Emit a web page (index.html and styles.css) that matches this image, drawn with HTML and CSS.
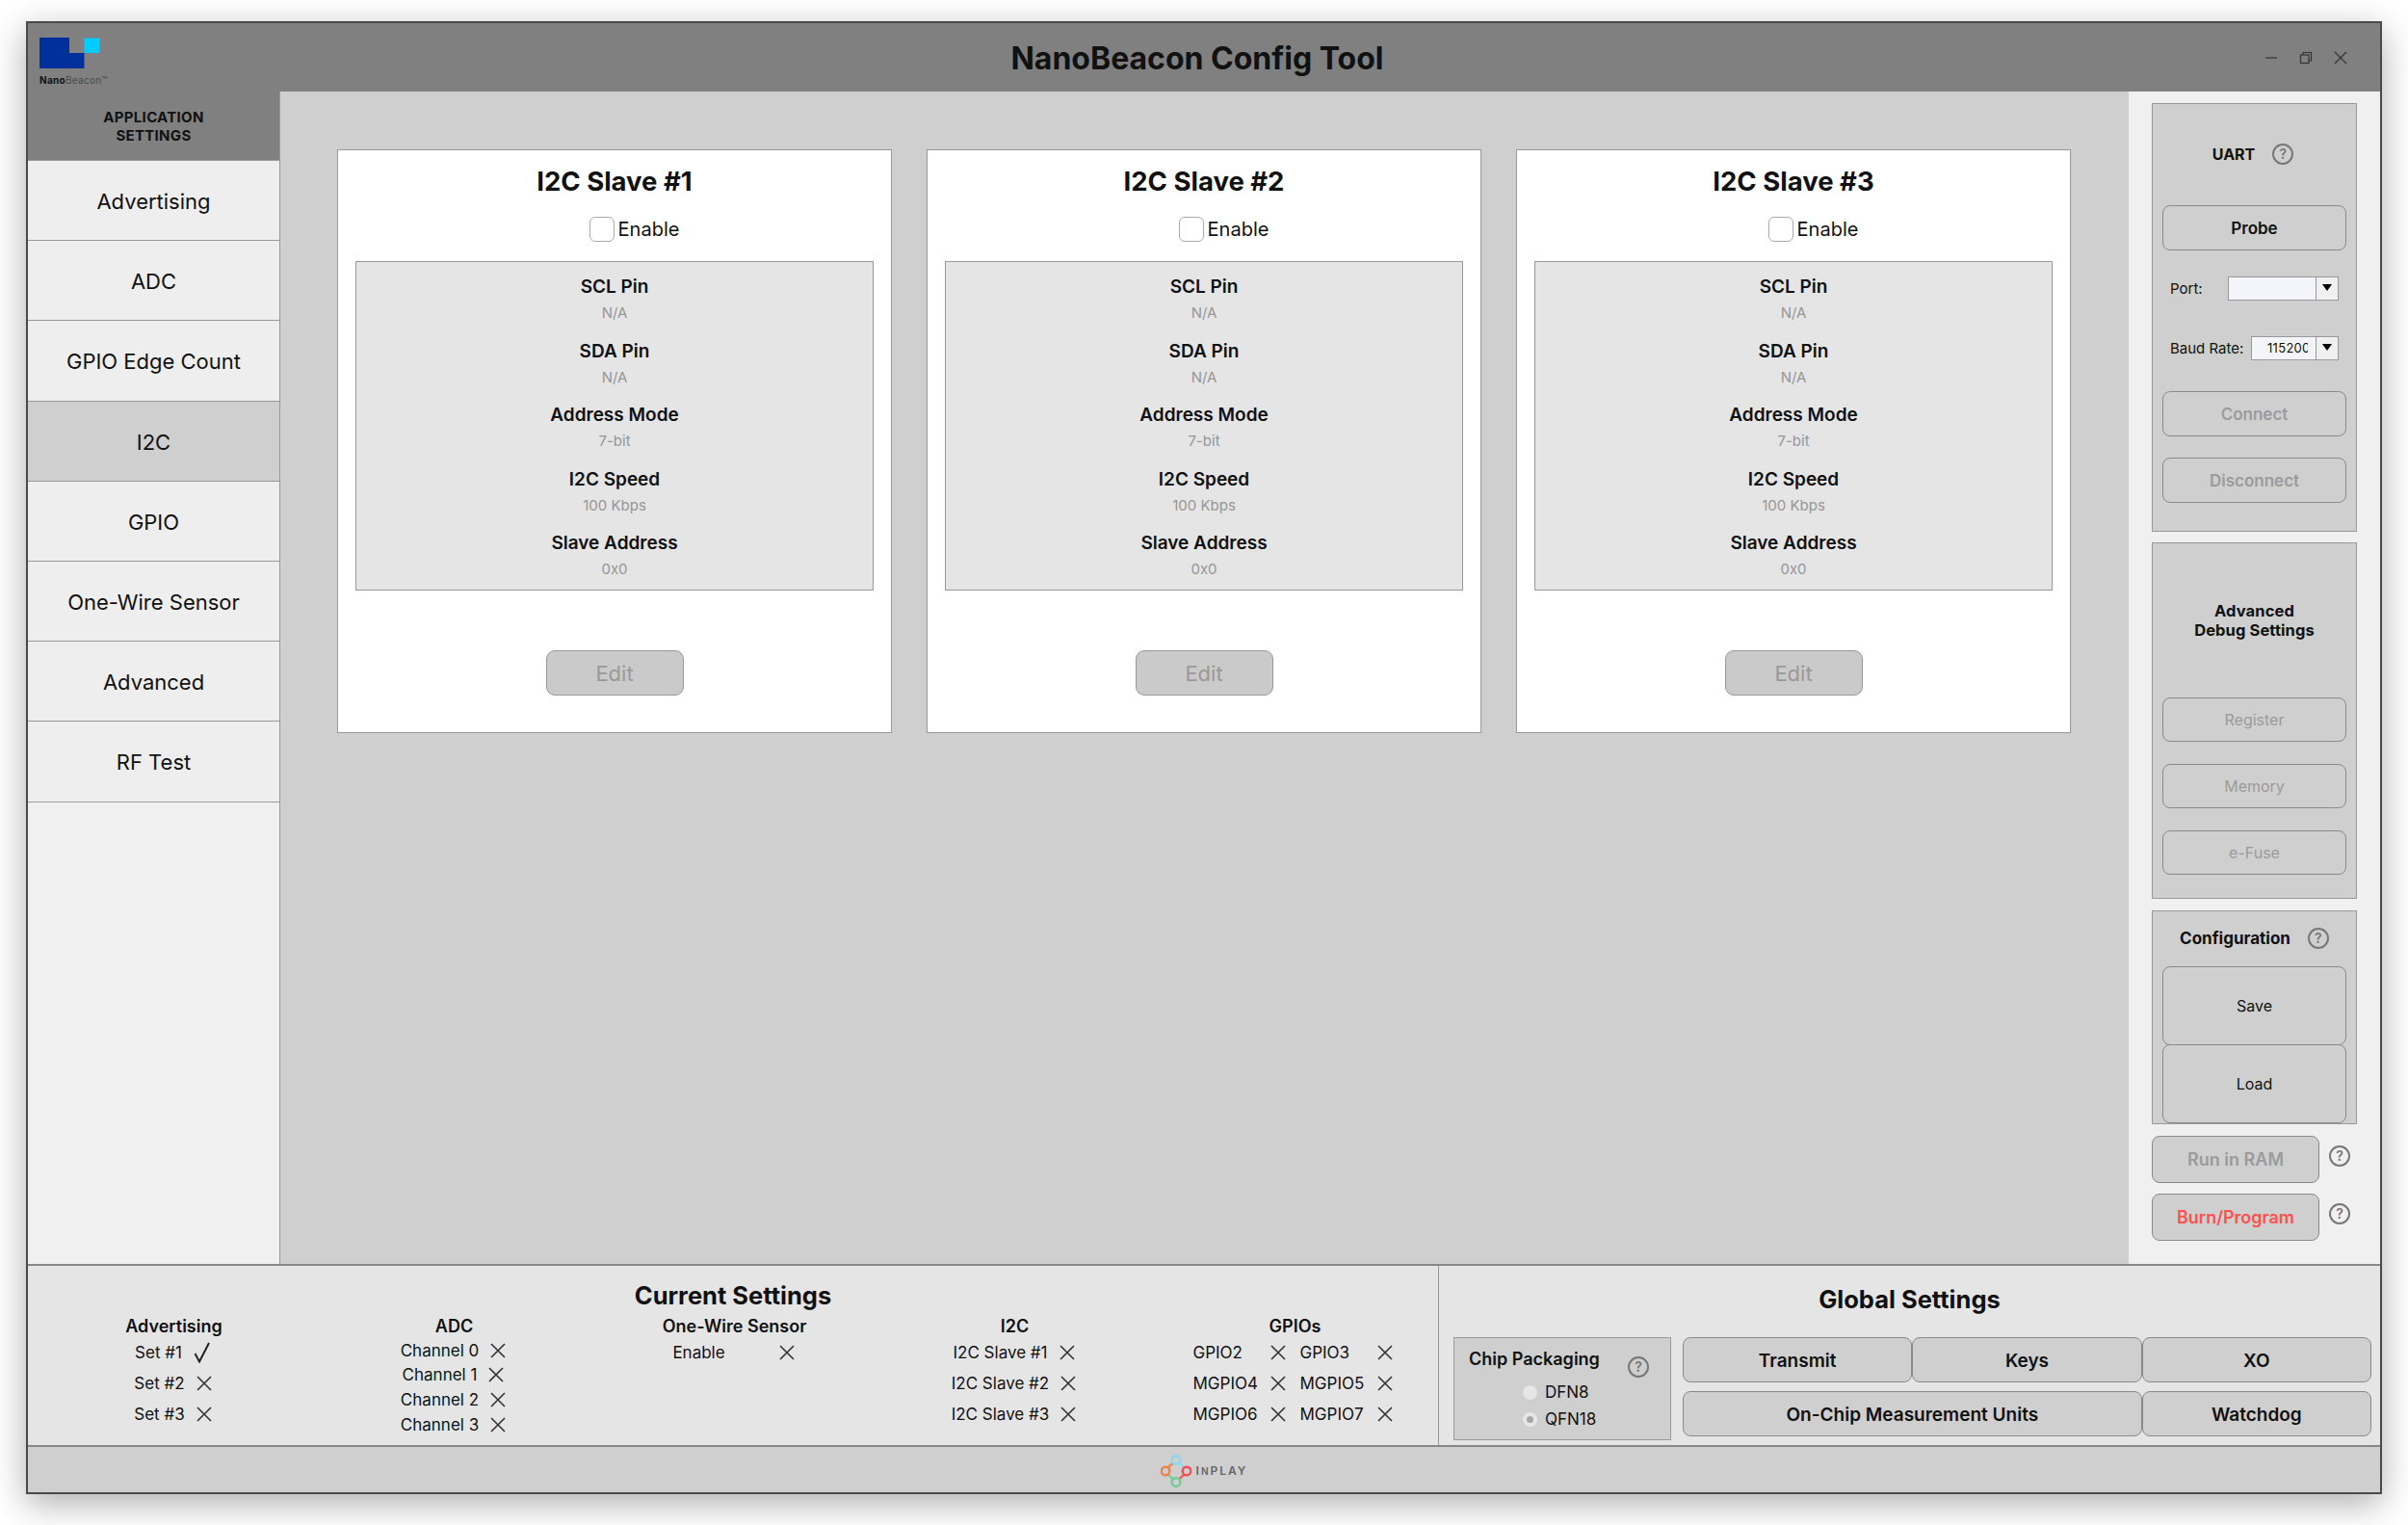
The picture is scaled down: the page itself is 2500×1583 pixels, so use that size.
FILE: index.html
```html
<!DOCTYPE html>
<html lang="en">
<head>
    <meta charset="UTF-8">
    <title>NanoBeacon Config Tool</title>
    <link rel="stylesheet" href="styles.css">
</head>
<body>
    <div class="window">
        <header class="titlebar">
            <div class="logo">
                <svg class="logo-mark" width="63" height="32" viewBox="0 0 63 32">
                    <path d="M0 0H31V16H46.500V32H0Z" fill="#00309b"/>
                    <rect x="46.500" y="0.500" width="16" height="15.500" fill="#00ccff"/>
                </svg>
                <div class="logo-text"><b>Nano</b>Beacon™</div>
            </div>
            <h1>NanoBeacon Config Tool</h1>
            <div class="window-controls">
                <svg width="14" height="14" viewBox="0 0 14 14"><path d="M1 7H13" stroke="#333" stroke-width="1.200"/></svg>
                <svg width="14" height="14" viewBox="0 0 14 14" fill="none" stroke="#333" stroke-width="1.200"><rect x="1.500" y="4" width="8.500" height="8.500"/><path d="M4 4V1.500H12.500V10H10"/></svg>
                <svg width="14" height="14" viewBox="0 0 14 14"><path d="M1 1L13 13M13 1L1 13" stroke="#333" stroke-width="1.200"/></svg>
            </div>
        </header>

        <div class="content">
            <nav class="sidebar">
                <div class="sidebar-head">APPLICATION<br>SETTINGS</div>
                <a class="nav-item">Advertising</a>
                <a class="nav-item">ADC</a>
                <a class="nav-item">GPIO Edge Count</a>
                <a class="nav-item nav-active">I2C</a>
                <a class="nav-item">GPIO</a>
                <a class="nav-item">One-Wire Sensor</a>
                <a class="nav-item">Advanced</a>
                <a class="nav-item">RF Test</a>
            </nav>

            <main class="main">
                <section class="card">
                    <h2>I2C Slave #1</h2>
                    <label class="enable"><span class="checkbox"></span>Enable</label>
                    <div class="fields">
                        <div class="field-name">SCL Pin</div><div class="field-value">N/A</div>
                        <div class="field-name">SDA Pin</div><div class="field-value">N/A</div>
                        <div class="field-name">Address Mode</div><div class="field-value">7-bit</div>
                        <div class="field-name">I2C Speed</div><div class="field-value">100 Kbps</div>
                        <div class="field-name">Slave Address</div><div class="field-value">0x0</div>
                    </div>
                    <button class="edit-btn">Edit</button>
                </section>
                <section class="card">
                    <h2>I2C Slave #2</h2>
                    <label class="enable"><span class="checkbox"></span>Enable</label>
                    <div class="fields">
                        <div class="field-name">SCL Pin</div><div class="field-value">N/A</div>
                        <div class="field-name">SDA Pin</div><div class="field-value">N/A</div>
                        <div class="field-name">Address Mode</div><div class="field-value">7-bit</div>
                        <div class="field-name">I2C Speed</div><div class="field-value">100 Kbps</div>
                        <div class="field-name">Slave Address</div><div class="field-value">0x0</div>
                    </div>
                    <button class="edit-btn">Edit</button>
                </section>
                <section class="card">
                    <h2>I2C Slave #3</h2>
                    <label class="enable"><span class="checkbox"></span>Enable</label>
                    <div class="fields">
                        <div class="field-name">SCL Pin</div><div class="field-value">N/A</div>
                        <div class="field-name">SDA Pin</div><div class="field-value">N/A</div>
                        <div class="field-name">Address Mode</div><div class="field-value">7-bit</div>
                        <div class="field-name">I2C Speed</div><div class="field-value">100 Kbps</div>
                        <div class="field-name">Slave Address</div><div class="field-value">0x0</div>
                    </div>
                    <button class="edit-btn">Edit</button>
                </section>
            </main>

            <aside class="tools">
                <div class="box box-uart">
                    <div class="box-head uart-head"><b>UART</b><span class="help">?</span></div>
                    <button class="btn btn-strong">Probe</button>
                    <div class="port-row">
                        <span>Port:</span>
                        <div class="combo combo-port"><span class="combo-text"></span><span class="combo-arrow"></span></div>
                    </div>
                    <div class="baud-row">
                        <span>Baud Rate:</span>
                        <div class="combo combo-baud"><span class="combo-text">115200</span><span class="combo-arrow"></span></div>
                    </div>
                    <button class="btn btn-strong btn-off connect-btn">Connect</button>
                    <button class="btn btn-strong btn-off disconnect-btn">Disconnect</button>
                </div>

                <div class="box box-debug">
                    <div class="box-head debug-head"><b>Advanced<br>Debug Settings</b></div>
                    <button class="btn btn-off debug-btn">Register</button>
                    <button class="btn btn-off debug-btn">Memory</button>
                    <button class="btn btn-off debug-btn">e-Fuse</button>
                </div>

                <div class="box box-config">
                    <div class="box-head config-head"><b>Configuration</b><span class="help">?</span></div>
                    <button class="btn config-btn">Save</button>
                    <button class="btn config-btn load-btn">Load</button>
                </div>

                <div class="action-row">
                    <button class="btn btn-strong btn-off action-btn">Run in RAM</button>
                    <span class="help">?</span>
                </div>
                <div class="action-row">
                    <button class="btn btn-strong btn-burn action-btn">Burn/Program</button>
                    <span class="help">?</span>
                </div>
            </aside>
        </div>

        <div class="bottom">
            <section class="current">
                <h3>Current Settings</h3>
                <div class="current-cols">
                    <div class="col">
                        <h4>Advertising</h4>
                        <div class="state"><span>Set #1</span><svg class="check" width="18" height="22" viewBox="0 0 18 22"><path d="M1.500 12L6 20.500L16 1" fill="none" stroke="#222" stroke-width="2"/></svg></div>
                        <div class="state"><span>Set #2</span><svg class="cross" viewBox="0 0 16 16"><path d="M1 1L15 15M15 1L1 15"/></svg></div>
                        <div class="state"><span>Set #3</span><svg class="cross" viewBox="0 0 16 16"><path d="M1 1L15 15M15 1L1 15"/></svg></div>
                    </div>
                    <div class="col col-adc">
                        <h4>ADC</h4>
                        <div class="state"><span>Channel 0</span><svg class="cross" viewBox="0 0 16 16"><path d="M1 1L15 15M15 1L1 15"/></svg></div>
                        <div class="state"><span>Channel 1</span><svg class="cross" viewBox="0 0 16 16"><path d="M1 1L15 15M15 1L1 15"/></svg></div>
                        <div class="state"><span>Channel 2</span><svg class="cross" viewBox="0 0 16 16"><path d="M1 1L15 15M15 1L1 15"/></svg></div>
                        <div class="state"><span>Channel 3</span><svg class="cross" viewBox="0 0 16 16"><path d="M1 1L15 15M15 1L1 15"/></svg></div>
                    </div>
                    <div class="col col-wire">
                        <h4>One-Wire Sensor</h4>
                        <div class="state"><span>Enable</span><svg class="cross" viewBox="0 0 16 16"><path d="M1 1L15 15M15 1L1 15"/></svg></div>
                    </div>
                    <div class="col">
                        <h4>I2C</h4>
                        <div class="state"><span>I2C Slave #1</span><svg class="cross" viewBox="0 0 16 16"><path d="M1 1L15 15M15 1L1 15"/></svg></div>
                        <div class="state"><span>I2C Slave #2</span><svg class="cross" viewBox="0 0 16 16"><path d="M1 1L15 15M15 1L1 15"/></svg></div>
                        <div class="state"><span>I2C Slave #3</span><svg class="cross" viewBox="0 0 16 16"><path d="M1 1L15 15M15 1L1 15"/></svg></div>
                    </div>
                    <div class="col">
                        <h4>GPIOs</h4>
                        <div class="gpio-grid">
                            <span>GPIO2</span><svg class="cross" viewBox="0 0 16 16"><path d="M1 1L15 15M15 1L1 15"/></svg>
                            <span>GPIO3</span><svg class="cross" viewBox="0 0 16 16"><path d="M1 1L15 15M15 1L1 15"/></svg>
                            <span>MGPIO4</span><svg class="cross" viewBox="0 0 16 16"><path d="M1 1L15 15M15 1L1 15"/></svg>
                            <span>MGPIO5</span><svg class="cross" viewBox="0 0 16 16"><path d="M1 1L15 15M15 1L1 15"/></svg>
                            <span>MGPIO6</span><svg class="cross" viewBox="0 0 16 16"><path d="M1 1L15 15M15 1L1 15"/></svg>
                            <span>MGPIO7</span><svg class="cross" viewBox="0 0 16 16"><path d="M1 1L15 15M15 1L1 15"/></svg>
                        </div>
                    </div>
                </div>
            </section>

            <section class="global">
                <h3>Global Settings</h3>
                <div class="global-row">
                    <div class="chip-box">
                        <div class="chip-head"><b>Chip Packaging</b><span class="help">?</span></div>
                        <div class="radio-row"><span class="radio"></span>DFN8</div>
                        <div class="radio-row"><span class="radio radio-on"></span>QFN18</div>
                    </div>
                    <div class="global-btns">
                        <button class="btn btn-strong">Transmit</button>
                        <button class="btn btn-strong">Keys</button>
                        <button class="btn btn-strong">XO</button>
                        <button class="btn btn-strong span-two">On-Chip Measurement Units</button>
                        <button class="btn btn-strong">Watchdog</button>
                    </div>
                </div>
            </section>
        </div>

        <footer class="footer">
            <svg width="32" height="34" viewBox="0 0 32 34" fill="none" stroke-width="2.400">
                <path d="M8 13L13 8.500" stroke="#ef8a55"/>
                <path d="M19 8.500L24 13" stroke="#8fd6ee"/>
                <path d="M8 21L13 25.500" stroke="#7fcf9e"/>
                <path d="M24 21L19 25.500" stroke="#ee5c62"/>
                <circle cx="16" cy="5.500" r="4.300" stroke="#8fd6ee"/>
                <circle cx="5" cy="17" r="4.300" stroke="#ef8050"/>
                <circle cx="27" cy="17" r="4.300" stroke="#ee5058"/>
                <circle cx="16" cy="28.500" r="4.300" stroke="#75cc98"/>
            </svg>
            <span class="inplay">I<small>N</small>PLAY</span>
        </footer>
    </div>
</body>
</html>
```

FILE: styles.css
```css
* {
    box-sizing: border-box;
    font-family: "Inter", "Liberation Sans", sans-serif;
}
html, body {
    margin: 0;
    height: 100%;
    background: white;
    overflow: hidden;
}
.window {
    display: flex;
    flex-direction: column;
    width: 2446px;
    height: 1529px;
    margin: 22px 0 0 27px;
    border: 2px solid #4a4a4a;
    background: #f0f0f0;
    box-shadow: 0 10px 34px rgba(0, 0, 0, 0.32);
    color: #111;
}

/* title bar */
.titlebar {
    display: grid;
    grid-template-columns: 1fr auto 1fr;
    align-items: center;
    flex: 0 0 71px;
    padding: 0 26px 0 12px;
    background: #808080;
}
.titlebar h1 {
    margin: 2px 0 0;
    font-size: 32px;
    font-weight: 700;
    color: #111;
}
.logo {
    display: flex;
    flex-direction: column;
    padding-top: 15px;
    align-self: start;
}
.logo-text {
    margin-top: 6px;
    font-size: 10px;
    letter-spacing: 0.3px;
    color: #4a4a4a;
}
.logo-text b {
    color: #111;
}
.window-controls {
    display: flex;
    justify-content: flex-end;
    gap: 22px;
    padding-right: 8px;
}

/* main row */
.content {
    display: flex;
    flex: 0 0 1217px;
    min-height: 0;
}
.sidebar {
    display: flex;
    flex-direction: column;
    flex: 0 0 262px;
    background: #f0f0f0;
    border-right: 1px solid #999;
}
.sidebar-head {
    display: flex;
    flex: none;
    align-items: center;
    justify-content: center;
    height: 72px;
    background: #808080;
    border-bottom: 1.500px solid #999;
    font-size: 15px;
    font-weight: 700;
    line-height: 19px;
    letter-spacing: 0.3px;
    text-align: center;
}
.nav-item {
    display: flex;
    flex: none;
    align-items: center;
    justify-content: center;
    height: 83.200px;
    padding-top: 2px;
    background: #eeeeee;
    border-bottom: 1.500px solid #999;
    font-size: 22px;
}
.nav-active {
    background: #cfcfcf;
}
.main {
    display: grid;
    grid-template-columns: repeat(3, 576px);
    grid-auto-rows: 606px;
    gap: 36px;
    flex: 1;
    padding: 60px 0 0 59px;
    background: #cfcfcf;
}

/* cards */
.card {
    display: flex;
    flex-direction: column;
    align-items: center;
    background: white;
    border: 1.500px solid #999;
}
.card h2 {
    margin: 15px 0 0;
    font-size: 27.500px;
    font-weight: 700;
    line-height: 34px;
}
.enable {
    display: flex;
    align-items: center;
    gap: 4px;
    height: 26px;
    margin: 20px 0 0 41px;
    font-size: 20px;
}
.checkbox {
    width: 26px;
    height: 26px;
    border: 1.500px solid #aaa;
    border-radius: 6px;
    background: white;
}
.fields {
    width: 538px;
    height: 342px;
    margin-top: 20px;
    padding-top: 14px;
    background: #e5e5e5;
    border: 1.500px solid #999;
    text-align: center;
}
.field-name {
    font-size: 19px;
    font-weight: 600;
    line-height: 24px;
}
.field-value {
    margin: 5px 0 17.600px;
    font-size: 15px;
    line-height: 20px;
    color: #969696;
}
.edit-btn {
    width: 143px;
    height: 47px;
    margin-top: 62px;
    background: #cacaca;
    border: 1.500px solid #999;
    border-radius: 9px;
    font-size: 22px;
    color: #999;
}

/* right column */
.tools {
    display: flex;
    flex-direction: column;
    flex: 0 0 261px;
    padding: 12px 24px 0;
    background: #f0f0f0;
}
.box {
    display: flex;
    flex: none;
    flex-direction: column;
    width: 213px;
    padding: 0 10px;
    background: #cfcfcf;
    border: 1.500px solid #999;
}
.box-uart {
    height: 445px;
}
.box-debug {
    height: 370px;
    margin-top: 11px;
}
.box-config {
    height: 222px;
    margin-top: 11.500px;
}
.box-head {
    display: flex;
    flex: none;
    align-items: center;
    justify-content: center;
    font-size: 16px;
    line-height: 20px;
    text-align: center;
}
.uart-head {
    height: 104.500px;
    gap: 18px;
    padding-right: 3px;
}
.debug-head {
    height: 159.500px;
    font-size: 16.500px;
    letter-spacing: 0.1px;
}
.config-head {
    height: 57px;
    gap: 18px;
    font-size: 17px;
}
.btn {
    flex: none;
    height: 47px;
    padding: 1px 0 0;
    background: #cfcfcf;
    border: 1.500px solid #8a8a8a;
    border-radius: 8px;
    font-size: 16px;
    color: #111;
}
.btn-strong {
    font-size: 17px;
    font-weight: 600;
}
.btn-off {
    color: #9b9b9b;
}
.btn-burn {
    color: #ff5050;
}
.help {
    display: inline-flex;
    align-items: center;
    justify-content: center;
    flex: none;
    width: 22px;
    height: 22px;
    border: 2px solid #777;
    border-radius: 50%;
    font-size: 14px;
    font-weight: 600;
    color: #777;
}
.port-row, .baud-row {
    display: flex;
    flex: none;
    align-items: center;
    justify-content: space-between;
    height: 25px;
    padding: 0 8px;
    font-size: 15px;
}
.port-row {
    margin-top: 27px;
}
.baud-row {
    margin-top: 37px;
}
.combo {
    display: flex;
    height: 25px;
    background: #f4f5fa;
    border: 1.500px solid #999;
}
.combo-port {
    width: 115px;
}
.combo-baud {
    width: 91px;
}
.combo-text {
    flex: 1;
    min-width: 0;
    margin: 0 8px 0 16px;
    overflow: hidden;
    font-size: 13px;
    line-height: 22px;
    letter-spacing: 0.3px;
    white-space: nowrap;
}
.combo-arrow {
    position: relative;
    flex: 0 0 23px;
    background: #f0f0f0;
    border-left: 1.500px solid #999;
}
.combo-arrow::after {
    content: "";
    position: absolute;
    left: 6px;
    top: 7px;
    border-style: solid;
    border-width: 7px 5.500px 0;
    border-color: black transparent transparent;
}
.connect-btn {
    margin-top: 32px;
}
.disconnect-btn {
    margin-top: 22px;
}
.debug-btn {
    height: 46.500px;
    margin-bottom: 22.500px;
}
.config-btn {
    height: 82px;
}
.load-btn {
    margin-top: -1px;
}
.action-row {
    display: flex;
    gap: 10px;
    margin-top: 12px;
}
.action-row:last-child {
    margin-top: 11px;
}
.action-row .help {
    margin-top: 10px;
}
.action-btn {
    width: 174px;
    height: 49px;
    font-size: 18px;
}

/* bottom panels */
.bottom {
    display: flex;
    flex: 0 0 190px;
    background: #e5e5e5;
    border-top: 2px solid #888;
    border-bottom: 2px solid #888;
}
.current {
    flex: 0 0 1465px;
    padding: 15px 0 0 6px;
    border-right: 1.500px solid #999;
}
.current h3, .global h3 {
    margin: 0;
    font-size: 25.500px;
    font-weight: 700;
    line-height: 32px;
    text-align: center;
}
.current h3 {
    padding-right: 6px;
}
.current-cols {
    display: grid;
    grid-template-columns: repeat(5, 291px);
    margin-top: 4px;
}
.col h4 {
    margin: 0 0 -1.500px;
    font-size: 18px;
    font-weight: 600;
    line-height: 24px;
    text-align: center;
}
.col-adc h4 {
    margin-bottom: 0;
}
.state {
    display: flex;
    align-items: center;
    justify-content: center;
    gap: 12px;
    height: 32px;
    padding-right: 2px;
    font-size: 17px;
}
.col-adc .state {
    height: 25.600px;
}
.col-wire .state {
    gap: 56px;
}
.cross {
    flex: none;
    width: 16px;
    height: 16px;
    fill: none;
    stroke: #333;
    stroke-width: 1.600;
}
.gpio-grid {
    display: grid;
    grid-template-columns: 80px 31px 80px 16px;
    grid-auto-rows: 32px;
    align-items: center;
    justify-content: center;
    padding-right: 5px;
    font-size: 17px;
}
.global {
    flex: 1;
    padding-top: 19px;
}
.global-row {
    display: flex;
    gap: 12px;
    margin-top: 23px;
    padding: 0 9px 0 15px;
}
.chip-box {
    flex: 0 0 226px;
    height: 107px;
    background: #cfcfcf;
    border: 1.500px solid #999;
}
.chip-head {
    display: flex;
    align-items: flex-start;
    justify-content: space-between;
    height: 42px;
    padding: 10px 22px 0 15px;
    font-size: 18px;
    line-height: 24px;
}
.chip-head b {
    font-weight: 600;
}
.chip-head .help {
    margin-top: 9px;
}
.radio-row {
    display: flex;
    align-items: center;
    gap: 8px;
    height: 28px;
    padding-left: 71px;
    font-size: 17px;
}
.radio {
    position: relative;
    width: 15px;
    height: 15px;
    border-radius: 50%;
    background: #e6e6e6;
}
.radio-on::after {
    content: "";
    position: absolute;
    left: 4px;
    top: 4px;
    width: 7px;
    height: 7px;
    border-radius: 50%;
    background: #a5a5a5;
}
.global-btns {
    display: grid;
    flex: 1;
    grid-template-columns: repeat(3, 1fr);
    grid-auto-rows: 47px;
    row-gap: 9px;
}
.global-btns .btn {
    height: 47px;
    font-size: 19px;
}
.span-two {
    grid-column: span 2;
}

.footer {
    display: flex;
    align-items: center;
    justify-content: center;
    gap: 5px;
    flex: 1;
    padding-top: 2px;
    background: #cfcfcf;
}
.inplay {
    font-size: 12px;
    font-weight: 600;
    letter-spacing: 2px;
    color: #666;
}
.inplay small {
    font-size: 10px;
}
```
